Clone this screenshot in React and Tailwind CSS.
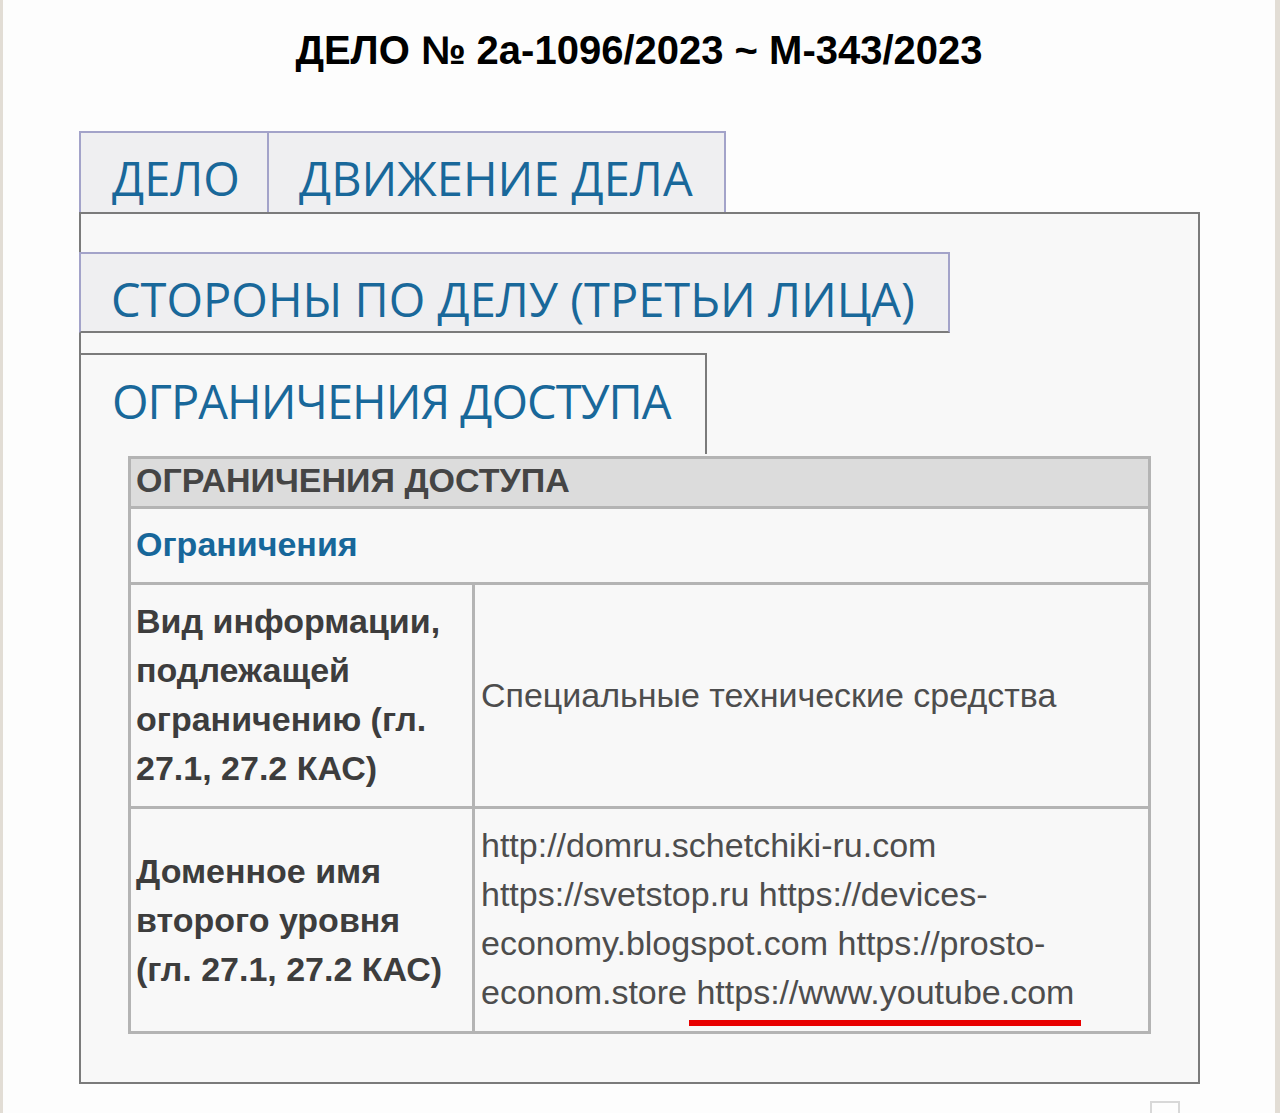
import React from 'react';

const tabText = "font-['Open_Sans',sans-serif] text-[#19689a] text-[47px] leading-none whitespace-nowrap";

const App = () => {
  return (
    <div className="min-h-[1113px] bg-[#fdfdfd] border-l-[3px] border-r-[5px] border-[#e2ddd5] font-['Liberation_Sans',Arial,sans-serif]">
      <h1 className="pt-[28px] text-center text-[40px] font-bold leading-[44px] text-black">
        ДЕЛО № 2а-1096/2023 ~ М-343/2023
      </h1>

      <div className="ml-[76px] mt-[59px] w-[1121px]">
        {/* верхние вкладки */}
        <div className="flex">
          <div className={`w-[190px] h-[81px] bg-[#efeff1] border-2 border-b-0 border-[#a3a3c9] pl-[31px] pt-[22px] ${tabText}`}>
            ДЕЛО
          </div>
          <div className={`w-[457px] h-[81px] bg-[#efeff1] border-2 border-l-0 border-b-0 border-[#a3a3c9] pl-[30px] pt-[22px] ${tabText}`}>
            ДВИЖЕНИЕ ДЕЛА
          </div>
        </div>

        <div className="bg-[#f8f8f8] border-2 border-[#7b7b7b] pb-[48px]">
          <div className={`mt-[38px] -ml-[2px] w-[871px] h-[81px] bg-[#efeff1] border-2 border-[#a3a3c9] border-b-[#7b7b7b] pl-[30px] pt-[22px] ${tabText}`}>
            СТОРОНЫ ПО ДЕЛУ (ТРЕТЬИ ЛИЦА)
          </div>

          <div className={`mt-[20px] w-[626px] h-[101px] border-t-2 border-r-2 border-[#7b7b7b] pl-[31px] pt-[23px] tracking-[-1px] ${tabText}`}>
            ОГРАНИЧЕНИЯ ДОСТУПА
          </div>

          <div className="mx-[47px] mt-[2px] border-[3px] border-[#b4b4b4] text-[34px] leading-[49px] text-[#3d3d3d]">
            <div className="h-[50px] bg-[#dcdcdc] border-b-[3px] border-[#b4b4b4] px-[5px] pt-[1px] font-bold leading-[40px] text-[#454545]">
              ОГРАНИЧЕНИЯ ДОСТУПА
            </div>
            <div className="h-[76px] border-b-[3px] border-[#b4b4b4] px-[5px] pt-[11px] font-bold text-[#17679a]">
              Ограничения
            </div>
            <div className="grid grid-cols-[344px_1fr] border-b-[3px] border-[#b4b4b4]">
              <div className="border-r-[3px] border-[#b4b4b4] px-[5px] pt-[12px] pb-[13px] font-bold">
                Вид информации,<br />подлежащей<br />ограничению (гл.<br />27.1, 27.2 КАС)
              </div>
              <div className="flex items-center px-[6px] text-[#4d4d4d]">
                Специальные технические средства
              </div>
            </div>
            <div className="grid grid-cols-[344px_1fr]">
              <div className="flex items-center border-r-[3px] border-[#b4b4b4] px-[5px] font-bold">
                <div>Доменное имя<br />второго уровня<br />(гл. 27.1, 27.2 КАС)</div>
              </div>
              <div className="px-[6px] pt-[12px] pb-[14px] text-[#4d4d4d] whitespace-nowrap">
                http://domru.schetchiki-ru.com<br />
                https://svetstop.ru https://devices-<br />
                economy.blogspot.com https://prosto-<br />
                econom.store{' '}
                <span className="relative">
                  https://www.youtube.com
                  <span className="absolute left-[-7px] right-[-7px] bottom-[-15px] h-[6px] bg-[#e80000]"></span>
                </span>
              </div>
            </div>
          </div>
        </div>

        <div className="ml-[1071px] mt-[17px] w-[30px] h-[13px] border-2 border-b-0 border-[#d8d8d8]"></div>
      </div>
    </div>
  );
};

export default App;
